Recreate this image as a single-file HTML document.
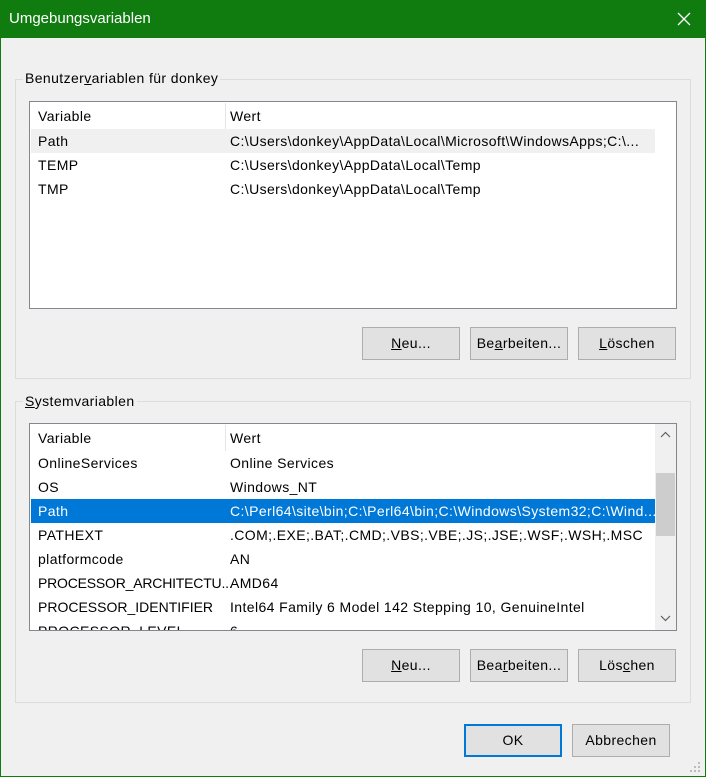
<!DOCTYPE html>
<html><head><meta charset="utf-8"><style>
*{margin:0;padding:0;box-sizing:border-box}
body{width:706px;height:777px;background:#f0f0f0;font-family:"Liberation Sans",sans-serif;font-size:14px;letter-spacing:0.4px;color:#000;position:relative;overflow:hidden}
.a{position:absolute}
.win{left:0;top:0;width:706px;height:777px;border:1px solid #107c10}
.title{left:0;top:0;width:706px;height:38px;background:#107c10;color:#fff;font-size:15px;letter-spacing:0}
.grp{border:1px solid #dcdcdc}
.leg{background:#f0f0f0;padding:0 2px}
.lv{background:#fff;border:1px solid #828790}
.row{position:absolute;left:1px;height:24px;width:624px;line-height:25px}
.row span{position:absolute}
.c1{left:7px;white-space:nowrap}.c2{left:199px;white-space:nowrap}
.hdr{position:absolute;left:1px;top:1px;width:624px;height:26px;line-height:27px;background:#fff}
.hdr .sep{position:absolute;left:194px;top:0;width:1px;height:26px;background:#e5e5e5}
.btn{position:absolute;height:33px;background:#e1e1e1;border:1px solid #adadad;text-align:center;line-height:31px}
u{text-decoration:underline}
</style></head><body>
<div class="a title"><span class="a" style="left:9px;top:10px">Umgebungsvariablen</span>
<svg class="a" style="left:677px;top:12px" width="14" height="14"><path d="M1 1L13 13M13 1L1 13" stroke="#fff" stroke-width="1.3"/></svg></div>
<div class="a win" style="border-top:none;top:38px;height:739px"></div>

<div class="a grp" style="left:15px;top:79px;width:676px;height:300px"></div>
<div class="a leg" style="left:23px;top:70px">Benutzer<u>v</u>ariablen für donkey</div>
<div class="a lv" style="left:29px;top:101px;width:648px;height:208px;overflow:hidden">
 <div class="hdr"><span class="a c1">Variable</span><span class="sep"></span><span class="a" style="left:199px">Wert</span></div>
 <div class="row" style="top:27px;background:#f0f0f0"><span class="c1">Path</span><span class="c2">C:\Users\donkey\AppData\Local\Microsoft\WindowsApps;C:\...</span></div>
 <div class="row" style="top:51px"><span class="c1">TEMP</span><span class="c2">C:\Users\donkey\AppData\Local\Temp</span></div>
 <div class="row" style="top:75px"><span class="c1">TMP</span><span class="c2">C:\Users\donkey\AppData\Local\Temp</span></div>
</div>
<div class="btn" style="left:362px;top:327px;width:98px"><u>N</u>eu...</div>
<div class="btn" style="left:470px;top:327px;width:98px">Be<u>a</u>rbeiten...</div>
<div class="btn" style="left:578px;top:327px;width:98px"><u>L</u>öschen</div>

<div class="a grp" style="left:15px;top:401px;width:676px;height:302px"></div>
<div class="a leg" style="left:23px;top:393px"><u>S</u>ystemvariablen</div>
<div class="a lv" style="left:29px;top:423px;width:648px;height:208px;overflow:hidden">
 <div class="hdr"><span class="a c1">Variable</span><span class="sep"></span><span class="a" style="left:199px">Wert</span></div>
 <div class="row" style="top:27px"><span class="c1">OnlineServices</span><span class="c2">Online Services</span></div>
 <div class="row" style="top:51px"><span class="c1">OS</span><span class="c2">Windows_NT</span></div>
 <div class="row" style="top:75px;background:#0078d7;color:#fff"><span class="c1">Path</span><span class="c2">C:\Perl64\site\bin;C:\Perl64\bin;C:\Windows\System32;C:\Wind...</span></div>
 <div class="row" style="top:99px"><span class="c1">PATHEXT</span><span class="c2">.COM;.EXE;.BAT;.CMD;.VBS;.VBE;.JS;.JSE;.WSF;.WSH;.MSC</span></div>
 <div class="row" style="top:123px"><span class="c1">platformcode</span><span class="c2">AN</span></div>
 <div class="row" style="top:147px"><span class="c1" style="letter-spacing:-0.2px">PROCESSOR_ARCHITECTU...</span><span class="c2">AMD64</span></div>
 <div class="row" style="top:171px"><span class="c1" style="letter-spacing:0">PROCESSOR_IDENTIFIER</span><span class="c2">Intel64 Family 6 Model 142 Stepping 10, GenuineIntel</span></div>
 <div class="row" style="top:195px"><span class="c1">PROCESSOR_LEVEL</span><span class="c2">6</span></div>
 <div class="a" style="left:625px;top:0;width:21px;height:206px;background:#f0f0f0">
  <svg class="a" style="left:5px;top:7px" width="11" height="7"><path d="M1 6L5.5 1.5L10 6" stroke="#606060" fill="none" stroke-width="1.2"/></svg>
  <div class="a" style="left:1px;top:49px;width:19px;height:63px;background:#cdcdcd"></div>
  <svg class="a" style="left:5px;top:191px" width="11" height="7"><path d="M1 1L5.5 5.5L10 1" stroke="#606060" fill="none" stroke-width="1.2"/></svg>
 </div>
</div>
<div class="btn" style="left:362px;top:649px;width:98px"><u>N</u>eu...</div>
<div class="btn" style="left:470px;top:649px;width:98px">Bea<u>r</u>beiten...</div>
<div class="btn" style="left:578px;top:649px;width:98px">Lös<u>c</u>hen</div>

<div class="btn" style="left:464px;top:724px;width:98px;border:2px solid #0078d7;line-height:29px">OK</div>
<div class="btn" style="left:572px;top:724px;width:98px">Abbrechen</div>
<svg class="a" style="left:690px;top:762px" width="12" height="12" fill="#bcbcbc"><rect x="8" y="0" width="2" height="2"/><rect x="4" y="4" width="2" height="2"/><rect x="8" y="4" width="2" height="2"/><rect x="0" y="8" width="2" height="2"/><rect x="4" y="8" width="2" height="2"/><rect x="8" y="8" width="2" height="2"/></svg>
</body></html>
